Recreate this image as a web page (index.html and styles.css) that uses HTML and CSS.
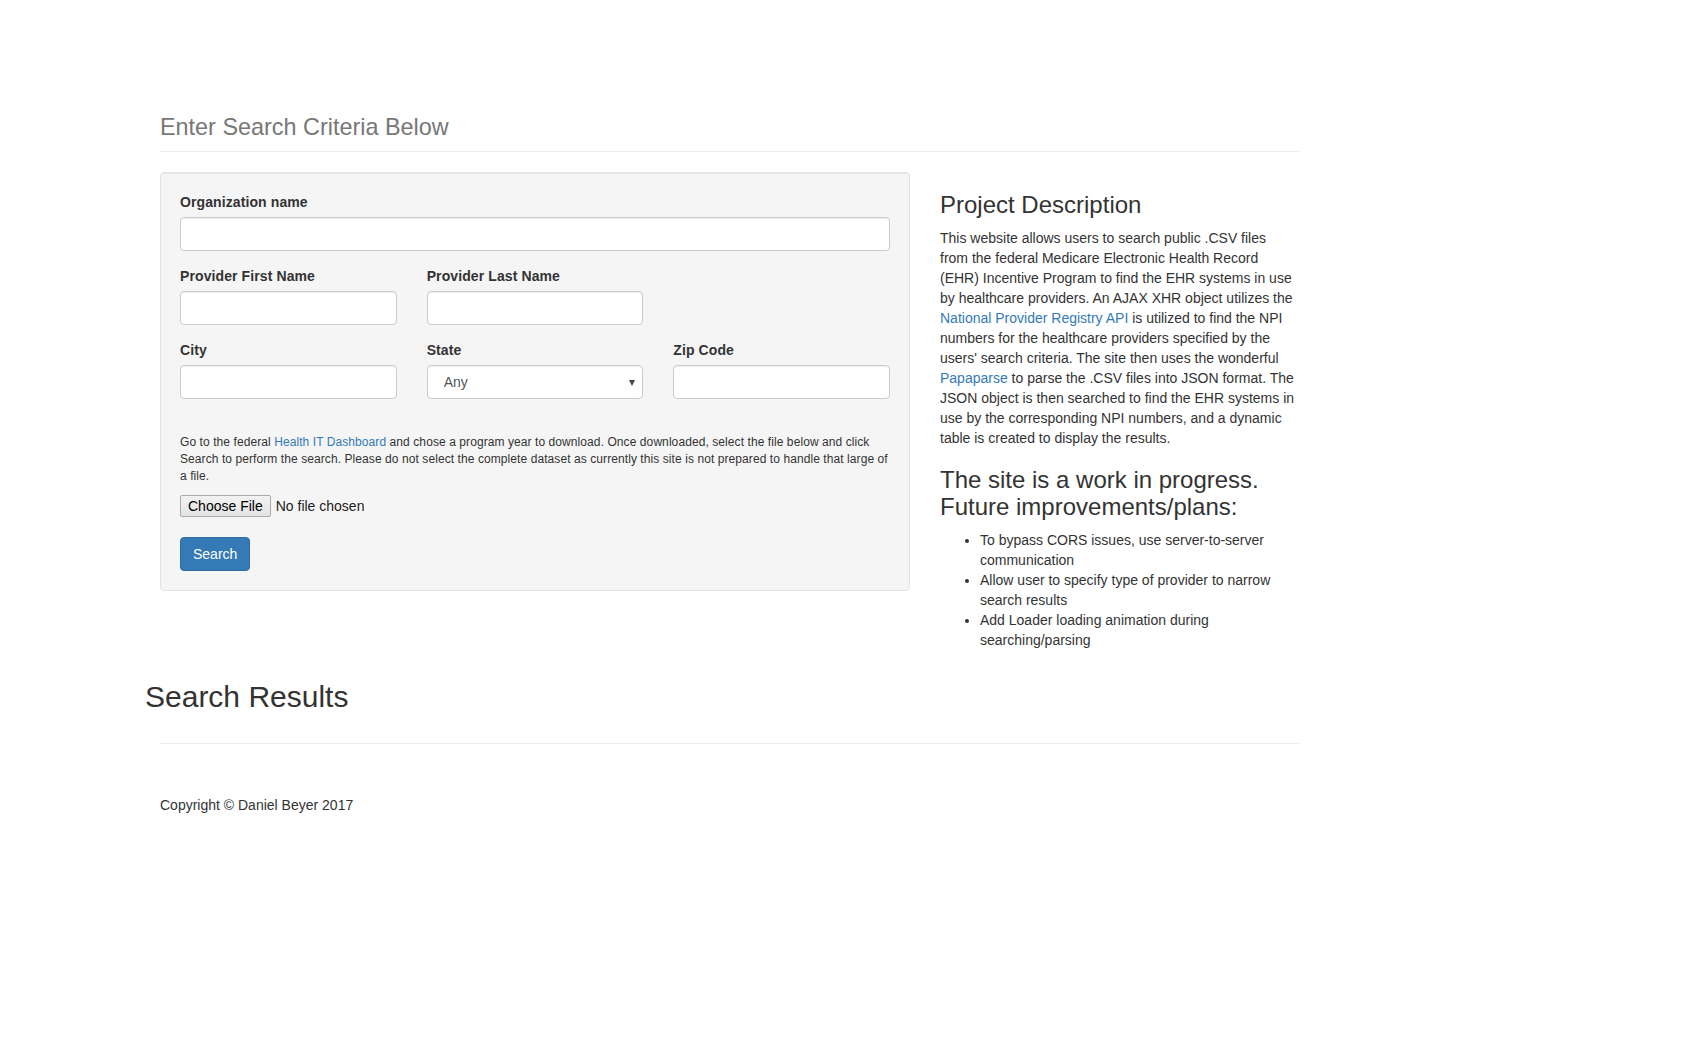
FILE: index.html
```html
<!DOCTYPE html>
<html lang="en">
<head>
<meta charset="utf-8">
<title>EHR Search</title>
<link rel="stylesheet" href="styles.css">
</head>
<body>
<div class="container">
  <div class="page-header">
    <h3 class="muted-title">Enter Search Criteria Below</h3>
  </div>

  <div class="main-row">
    <div class="left-col">
      <form class="well">
        <div class="form-group">
          <label class="field-label">Organization name</label>
          <input class="form-control" type="text">
        </div>
        <div class="grid-row">
          <div class="form-group">
            <label class="field-label">Provider First Name</label>
            <input class="form-control" type="text">
          </div>
          <div class="form-group">
            <label class="field-label">Provider Last Name</label>
            <input class="form-control" type="text">
          </div>
        </div>
        <div class="grid-row">
          <div class="form-group">
            <label class="field-label">City</label>
            <input class="form-control" type="text">
          </div>
          <div class="form-group">
            <label class="field-label">State</label>
            <div class="select-wrap">
              <select class="form-control select-control">
                <option>Any</option>
              </select>
              <span class="select-arrow"></span>
            </div>
          </div>
          <div class="form-group">
            <label class="field-label">Zip Code</label>
            <input class="form-control" type="text">
          </div>
        </div>
        <p class="note">Go to the federal <a href="#">Health IT Dashboard</a> and chose a program year to download. Once downloaded, select the file below and click Search to perform the search. Please do not select the complete dataset as currently this site is not prepared to handle that large of a file.</p>
        <div class="file-row">
          <span class="file-btn">Choose File</span>
          <span class="file-name">No file chosen</span>
        </div>
        <button type="button" class="btn-primary">Search</button>
      </form>
    </div>

    <div class="right-col">
      <h3 class="desc-title">Project Description</h3>
      <p class="desc-text">This website allows users to search public .CSV files from the federal Medicare Electronic Health Record (EHR) Incentive Program to find the EHR systems in use by healthcare providers. An AJAX XHR object utilizes the <a href="#">National Provider Registry API</a> is utilized to find the NPI numbers for the healthcare providers specified by the users' search criteria. The site then uses the wonderful <a href="#">Papaparse</a> to parse the .CSV files into JSON format. The JSON object is then searched to find the EHR systems in use by the corresponding NPI numbers, and a dynamic table is created to display the results.</p>
      <h3 class="plans-title">The site is a work in progress. Future improvements/plans:</h3>
      <ul class="plans">
        <li>To bypass CORS issues, use server-to-server communication</li>
        <li>Allow user to specify type of provider to narrow search results</li>
        <li>Add Loader loading animation during searching/parsing</li>
      </ul>
    </div>
  </div>

  <h2 class="results-title">Search Results</h2>
  <hr class="divider">
  <footer class="footer">Copyright © Daniel Beyer 2017</footer>
</div>
</body>
</html>
```

FILE: styles.css
```css
* {
  box-sizing: border-box;
}

html, body {
  margin: 0;
  padding: 0;
  background: #fff;
}

body {
  font-family: "Liberation Sans", Arial, Helvetica, sans-serif;
  font-size: 14px;
  line-height: 20px;
  color: #333;
}

a {
  color: #337ab7;
  text-decoration: none;
}

.container {
  width: 1170px;
  margin-left: 145px;
  padding: 0 15px;
}

.page-header {
  margin-top: 114px;
  padding-bottom: 10px;
  border-bottom: 1px solid #eee;
  margin-bottom: 20px;
}

.muted-title {
  margin: 0;
  font-size: 23.4px;
  line-height: 27px;
  font-weight: 500;
  color: #777;
}

.main-row {
  display: flex;
  gap: 30px;
  align-items: flex-start;
}

.left-col {
  width: 750px;
  flex: none;
}

.right-col {
  width: 357px;
  flex: none;
}

.well {
  display: block;
  margin: 0 0 20px;
  padding: 19px;
  background: #f5f5f5;
  border: 1px solid #e3e3e3;
  border-radius: 4px;
  box-shadow: inset 0 1px 1px rgba(0, 0, 0, .05);
}

.form-group {
  margin-bottom: 15px;
}

.field-label {
  display: block;
  font-weight: 700;
  margin-bottom: 5px;
  letter-spacing: 0.1px;
}

.form-control {
  display: block;
  width: 100%;
  height: 34px;
  padding: 6px 12px;
  font-family: inherit;
  font-size: 14px;
  color: #555;
  background: #fff;
  border: 1px solid #ccc;
  border-radius: 4px;
  box-shadow: inset 0 1px 1px rgba(0, 0, 0, .075);
}

.grid-row {
  display: grid;
  grid-template-columns: repeat(3, 1fr);
  column-gap: 30px;
}

.select-wrap {
  position: relative;
}

.select-control {
  -webkit-appearance: none;
  appearance: none;
  padding-left: 16px;
}

.select-arrow {
  position: absolute;
  right: 8px;
  top: 15px;
  width: 0;
  height: 0;
  border-left: 3px solid transparent;
  border-right: 3px solid transparent;
  border-top: 6px solid #444;
}

.note {
  margin: 20px -4px 10px 0;
  font-size: 12px;
  line-height: 17px;
  letter-spacing: 0.08px;
}

.file-row {
  display: flex;
  align-items: center;
  gap: 5px;
  margin-bottom: 20px;
}

.file-btn {
  display: inline-block;
  height: 22px;
  padding: 0 7px;
  font-size: 14px;
  line-height: 20px;
  color: #000;
  background: linear-gradient(#f2f2f2, #e4e4e4);
  border: 1px solid #a9a9a9;
  border-radius: 2px;
}

.file-name {
  font-size: 14px;
  color: #222;
}

.btn-primary {
  display: block;
  height: 34px;
  padding: 6px 12px;
  font-family: inherit;
  font-size: 14px;
  line-height: 20px;
  color: #fff;
  background: #337ab7;
  border: 1px solid #2e6da4;
  border-radius: 4px;
}

.desc-title {
  margin: 20px 0 10px;
  font-size: 24px;
  line-height: 26.4px;
  font-weight: 500;
  color: #333;
}

.desc-text {
  margin: 0;
}

.plans-title {
  margin: 19px 0 10px;
  font-size: 24px;
  line-height: 26.4px;
  font-weight: 500;
  color: #333;
}

.plans {
  margin: 0 0 10px;
  padding-left: 40px;
}

.results-title {
  margin: 20px 0 10px -15px;
  font-size: 30px;
  line-height: 33px;
  font-weight: 500;
  color: #333;
}

.divider {
  margin: 30px 0 0;
  border: 0;
  border-top: 1px solid #eee;
}

.footer {
  margin-top: 51px;
  padding-bottom: 40px;
}
```
